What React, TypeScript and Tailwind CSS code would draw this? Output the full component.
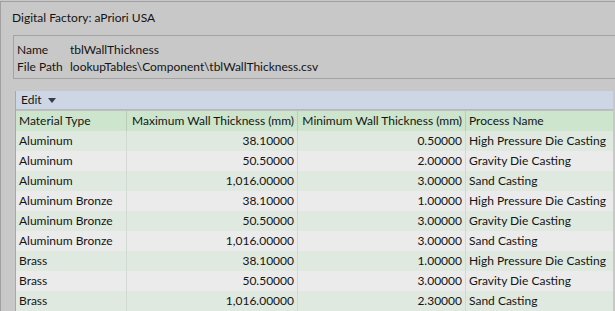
import React from "react";

type Row = {
  material: string;
  max: string;
  min: string;
  process: string;
};

const ROWS: Row[] = [
  { material: "Aluminum", max: "38.10000", min: "0.50000", process: "High Pressure Die Casting" },
  { material: "Aluminum", max: "50.50000", min: "2.00000", process: "Gravity Die Casting" },
  { material: "Aluminum", max: "1,016.00000", min: "3.00000", process: "Sand Casting" },
  { material: "Aluminum Bronze", max: "38.10000", min: "1.00000", process: "High Pressure Die Casting" },
  { material: "Aluminum Bronze", max: "50.50000", min: "3.00000", process: "Gravity Die Casting" },
  { material: "Aluminum Bronze", max: "1,016.00000", min: "3.00000", process: "Sand Casting" },
  { material: "Brass", max: "38.10000", min: "1.00000", process: "High Pressure Die Casting" },
  { material: "Brass", max: "50.50000", min: "3.00000", process: "Gravity Die Casting" },
  { material: "Brass", max: "1,016.00000", min: "2.30000", process: "Sand Casting" },
];

const COLS = "grid grid-cols-[111px_171px_168px_1fr]";

function InfoBox() {
  return (
    <div className="ml-[12px] h-[44px] border-t border-l border-b border-[#a3a3a3] pl-[3px] pt-[5px] leading-[17px]">
      <div className="flex">
        <span className="w-[53px]">Name</span>
        <span>tblWallThickness</span>
      </div>
      <div className="flex">
        <span className="w-[53px]">File Path</span>
        <span>lookupTables\Component\tblWallThickness.csv</span>
      </div>
    </div>
  );
}

function Toolbar() {
  return (
    <div className="h-[19px] bg-[#cdd6e4] flex items-center pl-[5px] gap-[6px] border-b border-[#b4b8bf]">
      <span>Edit</span>
      <svg width="8" height="5" viewBox="0 0 8 5">
        <path d="M0 0 H8 L4 5 Z" fill="#3a3a4a" />
      </svg>
    </div>
  );
}

function Table() {
  return (
    <div className="border-t border-[#c0c0c0] whitespace-nowrap">
      <div className={`${COLS} h-[20px] bg-[#cde4cd] items-center`}>
        <div className="px-[3px] border-r border-[#b9cdb9] h-full flex items-center">Material Type</div>
        <div className="px-[3px] border-r border-[#b9cdb9] h-full flex items-center justify-end">
          Maximum Wall Thickness (mm)
        </div>
        <div className="px-[3px] border-r border-[#b9cdb9] h-full flex items-center justify-end">
          Minimum Wall Thickness (mm)
        </div>
        <div className="px-[3px] h-full flex items-center">Process Name</div>
      </div>
      {ROWS.map((r, i) => (
        <div
          key={i}
          className={`${COLS} h-[20px] ${i % 2 === 0 ? "bg-[#dfe9df]" : "bg-[#ebebeb]"}`}
        >
          <div className="px-[3px] border-r border-[#d2d9d2] flex items-center">{r.material}</div>
          <div className="px-[3px] border-r border-[#d2d9d2] flex items-center justify-end">{r.max}</div>
          <div className="px-[3px] border-r border-[#d2d9d2] flex items-center justify-end">{r.min}</div>
          <div className="px-[3px] flex items-center">{r.process}</div>
        </div>
      ))}
    </div>
  );
}

export default function App() {
  return (
    <div
      className="w-[615px] h-[311px] overflow-hidden bg-[#c8c8c8] text-[12px] text-[#141414]"
      style={{ fontFamily: 'Lato, "Noto Sans", sans-serif' }}
    >
      <div className="mt-px h-[310px] border-t border-l border-[#a0a0a0]">
        <div className="h-[32px] pl-[11px] flex items-center">Digital Factory: aPriori USA</div>
        <div className="mt-px">
          <InfoBox />
        </div>
        <div className="ml-[14px] mt-[12px] border-l border-[#a8a8a8] mr-[2px]">
          <Toolbar />
          <Table />
        </div>
      </div>
    </div>
  );
}
